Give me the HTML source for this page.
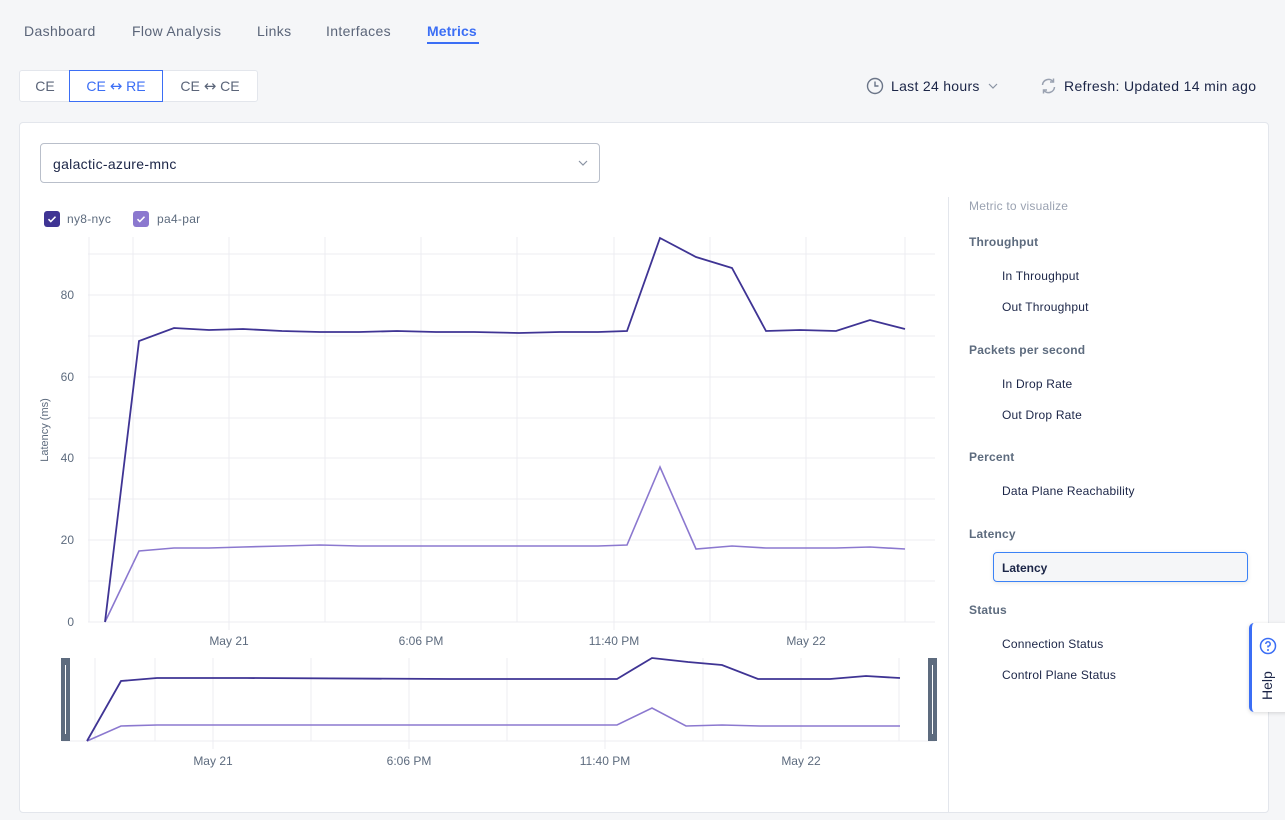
<!DOCTYPE html>
<html><head><style>
*{box-sizing:border-box;margin:0;padding:0}
body{width:1285px;height:820px;background:#f5f6f8;font-family:"Liberation Sans",sans-serif;position:relative;overflow:hidden;color:#1b2547}
.a{position:absolute;white-space:nowrap}
.tab{font-size:14px;color:#5b6579;top:23px;letter-spacing:0.35px}
.seg{top:70px;height:32px;border:1px solid #e3e6ec;background:#fff;font-size:14px;color:#5b6579;line-height:30px;text-align:center}
.arr{font-family:"DejaVu Sans",sans-serif;font-size:15px}
.m{font-size:12px;color:#1b2547;left:1002px;letter-spacing:0.2px}
.h{font-size:12px;font-weight:bold;color:#5d6b7e;left:969px;letter-spacing:0.2px}
.ax{font-size:12px;fill:#5d6b7e;font-family:"Liberation Sans",sans-serif}
</style></head><body>
<div class="a tab" style="left:24px">Dashboard</div>
<div class="a tab" style="left:132px">Flow Analysis</div>
<div class="a tab" style="left:257px">Links</div>
<div class="a tab" style="left:326px">Interfaces</div>
<div class="a tab" style="left:427px;color:#3b6ef5;font-weight:bold;letter-spacing:0.1px">Metrics</div>
<div class="a" style="left:427px;top:42px;width:52px;height:2px;background:#3b6ef5"></div>

<div class="a seg" style="left:19px;width:52px;border-radius:3px 0 0 3px">CE</div>
<div class="a seg" style="left:69px;width:94px;border-color:#3b6ef5;color:#3b6ef5;z-index:2">CE <span class="arr">↔</span> RE</div>
<div class="a seg" style="left:162px;width:96px;border-radius:0 3px 3px 0">CE <span class="arr">↔</span> CE</div>

<svg class="a" style="left:866px;top:77px" width="18" height="18" viewBox="0 0 18 18"><circle cx="9" cy="9" r="7.5" fill="none" stroke="#6b7588" stroke-width="1.4"/><path d="M9 4.5V9h3.5" fill="none" stroke="#6b7588" stroke-width="1.4"/></svg>
<div class="a" style="left:891px;top:78px;font-size:14px;letter-spacing:0.3px">Last 24 hours</div>
<svg class="a" style="left:988px;top:82px" width="10" height="8"><path d="M1 2l4 4 4-4" fill="none" stroke="#8a93a3" stroke-width="1.2"/></svg>
<svg class="a" style="left:1040px;top:77px" width="17" height="18" viewBox="0 0 17 18"><path d="M2.5 8A6 6 0 0 1 13 4.5M14.5 10A6 6 0 0 1 4 13.5" fill="none" stroke="#9aa2b1" stroke-width="1.5"/><path d="M13.5 1.5v3.5H10M3.5 16.5V13H7" fill="none" stroke="#9aa2b1" stroke-width="1.5"/></svg>
<div class="a" style="left:1064px;top:78px;font-size:14px;letter-spacing:0.35px">Refresh: Updated 14 min ago</div>

<div class="a" style="left:19px;top:122px;width:1250px;height:691px;background:#fff;border:1px solid #e3e6ec;border-radius:4px"></div>
<div class="a" style="left:40px;top:143px;width:560px;height:40px;border:1px solid #b9bfca;border-radius:4px;font-size:14px;padding:12px 12px;color:#1b2547;letter-spacing:0.3px">galactic-azure-mnc</div>
<svg class="a" style="left:578px;top:159px" width="10" height="8"><path d="M1 2l4 4 4-4" fill="none" stroke="#8a93a3" stroke-width="1.2"/></svg>

<div class="a" style="left:948px;top:197px;width:1px;height:615px;background:#e3e6ec"></div>

<div class="a" style="left:44px;top:211px;width:16px;height:16px;border-radius:3px;background:#3f3494"></div>
<div class="a" style="left:133px;top:211px;width:16px;height:16px;border-radius:3px;background:#8b78cf"></div>
<svg class="a" style="left:44px;top:211px" width="16" height="16"><path d="M4.5 8.2l2.3 2.3 4.7-4.8" fill="none" stroke="#fff" stroke-width="1.5"/></svg>
<svg class="a" style="left:133px;top:211px" width="16" height="16"><path d="M4.5 8.2l2.3 2.3 4.7-4.8" fill="none" stroke="#fff" stroke-width="1.5"/></svg>
<div class="a" style="left:67px;top:212px;font-size:12px;color:#5d6b7e;letter-spacing:0.3px">ny8-nyc</div>
<div class="a" style="left:157px;top:212px;font-size:12px;color:#5d6b7e;letter-spacing:0.3px">pa4-par</div>

<svg class="a" style="left:0;top:0" width="948" height="820">
<g stroke="#ececf2" stroke-width="1">
<path d="M88 254H935M88 295H935M88 336H935M88 377H935M88 418H935M88 458H935M88 499H935M88 540H935M88 581H935M88 622H935"/>
<path d="M89 237V622M133 237V622M229 237V622M325 237V622M421 237V622M517 237V622M614 237V622M710 237V622M806 237V622M905 237V622"/>
<path d="M229 622V630M421 622V630M614 622V630M806 622V630"/>
<path d="M95 658V741M155 658V741M213 658V741M311 658V741M409 658V741M507 658V741M605 658V741M703 658V741M801 658V741M899 658V741"/>
<path d="M62 741H935"/>
<path d="M213 741V749M409 741V749M605 741V749M801 741V749"/>
</g>
<text class="ax" x="74" y="299" text-anchor="end">80</text>
<text class="ax" x="74" y="381" text-anchor="end">60</text>
<text class="ax" x="74" y="462" text-anchor="end">40</text>
<text class="ax" x="74" y="544" text-anchor="end">20</text>
<text class="ax" x="74" y="626" text-anchor="end">0</text>
<text class="ax" x="48" y="430" transform="rotate(-90 48 430)" text-anchor="middle" style="font-size:11px">Latency (ms)</text>
<text class="ax" x="229" y="645" text-anchor="middle">May 21</text>
<text class="ax" x="421" y="645" text-anchor="middle">6:06 PM</text>
<text class="ax" x="614" y="645" text-anchor="middle">11:40 PM</text>
<text class="ax" x="806" y="645" text-anchor="middle">May 22</text>
<text class="ax" x="213" y="765" text-anchor="middle">May 21</text>
<text class="ax" x="409" y="765" text-anchor="middle">6:06 PM</text>
<text class="ax" x="605" y="765" text-anchor="middle">11:40 PM</text>
<text class="ax" x="801" y="765" text-anchor="middle">May 22</text>
<polyline fill="none" stroke="#8b78cf" stroke-width="1.6" points="105,622 139,551 174,548 209,548 243,547 282,546 320,545 359,546 397,546 436,546 474,546 519,546 560,546 598,546 627,545 660,467 696,549 732,546 766,548 800,548 836,548 870,547 905,549"/>
<polyline fill="none" stroke="#3f3494" stroke-width="1.8" points="105,622 139,341 174,328 209,330 243,329 282,331 320,332 359,332 397,331 436,332 474,332 519,333 560,332 598,332 627,331 660,238 696,257 732,268 766,331 800,330 836,331 870,320 905,329"/>
<polyline fill="none" stroke="#8b78cf" stroke-width="1.6" points="87,741 121,726 157,725 247,725 617,725 652,708 686,726 722,725 760,726 830,726 866,726 900,726"/>
<polyline fill="none" stroke="#3f3494" stroke-width="1.8" points="87,741 121,681 157,678 247,678 450,679 617,679 652,658 688,662 722,665 758,679 830,679 866,676 900,678"/>
<rect x="61" y="658" width="9" height="83" fill="#5d6b7e"/><rect x="65" y="665" width="1" height="69" fill="#fff"/>
<rect x="928" y="658" width="9" height="83" fill="#5d6b7e"/><rect x="932" y="665" width="1" height="69" fill="#fff"/>
</svg>

<div class="a" style="left:969px;top:199px;font-size:12px;color:#9aa2b1;letter-spacing:0.2px">Metric to visualize</div>
<div class="a h" style="top:235px">Throughput</div>
<div class="a m" style="top:269px">In Throughput</div>
<div class="a m" style="top:300px">Out Throughput</div>
<div class="a h" style="top:343px">Packets per second</div>
<div class="a m" style="top:377px">In Drop Rate</div>
<div class="a m" style="top:408px">Out Drop Rate</div>
<div class="a h" style="top:450px">Percent</div>
<div class="a m" style="top:484px">Data Plane Reachability</div>
<div class="a h" style="top:527px">Latency</div>
<div class="a" style="left:993px;top:552px;width:255px;height:30px;border:1px solid #3b82f6;border-radius:4px;background:#f5f6f8;font-size:12px;font-weight:bold;padding:8px 8px;box-shadow:0 1px 4px rgba(0,0,0,.1)">Latency</div>
<div class="a h" style="top:603px">Status</div>
<div class="a m" style="top:637px">Connection Status</div>
<div class="a m" style="top:668px">Control Plane Status</div>

<div class="a" style="left:1249px;top:623px;width:40px;height:89px;background:#fff;border-left:3px solid #3b6ef5;border-radius:5px 0 0 5px;box-shadow:0 1px 4px rgba(0,0,0,.15)"></div>
<svg class="a" style="left:1259px;top:637px" width="18" height="18"><circle cx="9" cy="9" r="7.5" fill="none" stroke="#3b6ef5" stroke-width="1.5"/><path d="M6.8 7a2.2 2.2 0 1 1 2.2 2.2V10.5" fill="none" stroke="#3b6ef5" stroke-width="1.5"/><circle cx="9" cy="13" r="1" fill="#3b6ef5"/></svg>
<div class="a" style="left:1259px;top:700px;font-size:14px;color:#1b2547;transform:rotate(-90deg);transform-origin:0 0">Help</div>
</body></html>
